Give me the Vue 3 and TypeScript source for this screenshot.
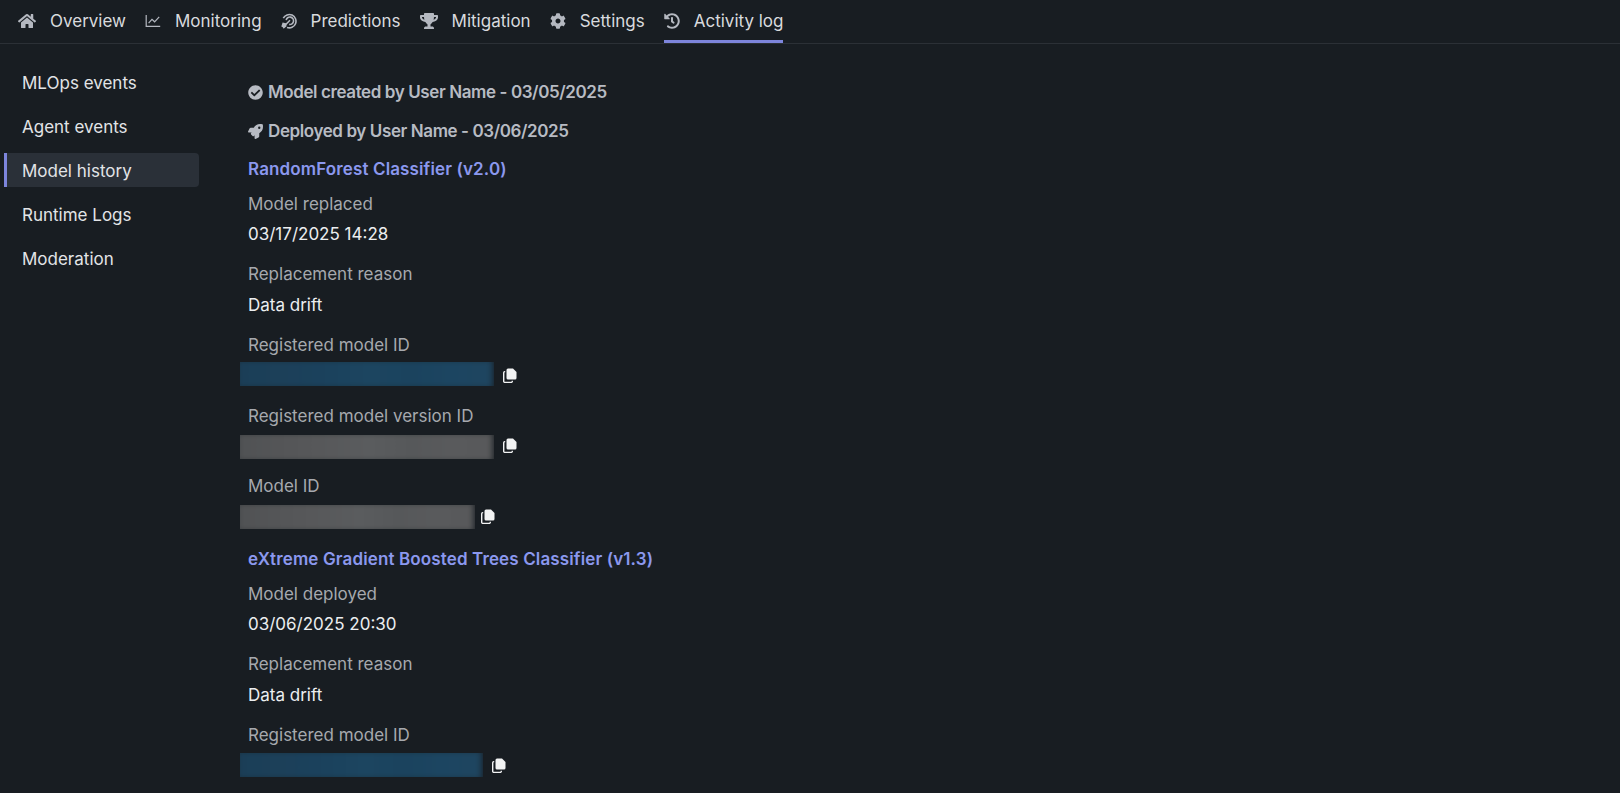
<script setup lang="ts">
interface Tab { label: string; width: number; view: string; path: string; active?: boolean }
const tabs: Tab[] = [
  { label: 'Overview', width: 18, view: '0 0 576 512', path: 'M280.37 148.26L96 300.11V464a16 16 0 0 0 16 16l112.06-.29a16 16 0 0 0 15.92-16V368a16 16 0 0 1 16-16h64a16 16 0 0 1 16 16v95.64a16 16 0 0 0 16 16.05L464 480a16 16 0 0 0 16-16V300L295.67 148.26a12.19 12.19 0 0 0-15.3 0zM571.6 251.47L488 182.56V44.05a12 12 0 0 0-12-12h-56a12 12 0 0 0-12 12v72.61L318.47 43a48 48 0 0 0-61 0L4.34 251.47a12 12 0 0 0-1.6 16.9l25.5 31A12 12 0 0 0 45.15 301l235.22-193.74a12.19 12.19 0 0 1 15.3 0L530.9 301a12 12 0 0 0 16.9-1.6l25.5-31a12 12 0 0 0-1.7-16.93z' },
  { label: 'Monitoring', width: 16, view: '', path: '' },
  { label: 'Predictions', width: 16, view: '', path: '' },
  { label: 'Mitigation', width: 18, view: '0 0 576 512', path: 'M552 64H448V24c0-13.3-10.7-24-24-24H152c-13.3 0-24 10.7-24 24v40H24C10.7 64 0 74.7 0 88v56c0 35.7 22.5 72.4 61.9 100.7 31.5 22.7 69.8 37.1 110 41.7C203.3 338.5 240 360 240 360v72h-48c-35.3 0-64 20.7-64 56v12c0 6.6 5.4 12 12 12h296c6.6 0 12-5.4 12-12v-12c0-35.3-28.7-56-64-56h-48v-72s36.7-21.5 68.1-73.6c40.3-4.6 78.6-19 110-41.7 39.3-28.3 61.9-65 61.9-100.7V88c0-13.3-10.7-24-24-24zM99.3 192.8C74.9 175.2 64 155.6 64 144v-16h64.2c1 32.6 5.8 61.2 12.8 86.2-15.1-5.2-29.2-12.4-41.7-21.4zM512 144c0 16.1-17.7 36.1-35.3 48.8-12.5 9-26.7 16.2-41.8 21.4 7-25 11.8-53.6 12.8-86.2H512v16z' },
  { label: 'Settings', width: 16, view: '0 0 512 512', path: 'M487.4 315.7l-42.6-24.6c4.3-23.2 4.3-47 0-70.2l42.6-24.6c4.9-2.8 7.1-8.6 5.5-14-11.1-35.6-30-67.8-54.7-94.6-3.8-4.1-10-5.1-14.8-2.3L380.8 110c-17.9-15.4-38.5-27.3-60.8-35.1V25.8c0-5.6-3.9-10.5-9.4-11.7-36.7-8.2-74.3-7.8-109.2 0-5.5 1.2-9.4 6.1-9.4 11.7V75c-22.2 7.9-42.8 19.8-60.8 35.1L88.7 85.5c-4.9-2.8-11-1.9-14.8 2.3-24.7 26.7-43.6 58.9-54.7 94.6-1.7 5.4.6 11.2 5.5 14L67.3 221c-4.3 23.2-4.3 47 0 70.2l-42.6 24.6c-4.9 2.8-7.1 8.6-5.5 14 11.1 35.6 30 67.8 54.7 94.6 3.8 4.1 10 5.1 14.8 2.3l42.6-24.6c17.9 15.4 38.5 27.3 60.8 35.1v49.2c0 5.6 3.9 10.5 9.4 11.7 36.7 8.2 74.3 7.8 109.2 0 5.5-1.2 9.4-6.1 9.4-11.7v-49.2c22.2-7.9 42.8-19.8 60.8-35.1l42.6 24.6c4.9 2.8 11 1.9 14.8-2.3 24.7-26.7 43.6-58.9 54.7-94.6 1.5-5.5-.7-11.3-5.6-14.1zM256 336c-44.1 0-80-35.9-80-80s35.9-80 80-80 80 35.9 80 80-35.9 80-80 80z' },
  { label: 'Activity log', width: 16, view: '0 0 512 512', active: true, path: 'M504 255.531c.253 136.64-111.18 248.372-247.82 248.468-59.015.042-113.223-20.53-155.822-54.911-11.077-8.94-11.905-25.541-1.839-35.607l11.267-11.267c8.609-8.609 22.353-9.551 31.891-1.984C173.062 425.135 212.781 440 256 440c101.705 0 184-82.311 184-184 0-101.705-82.311-184-184-184-48.814 0-93.149 18.969-126.068 49.932l50.754 50.754c10.08 10.08 2.941 27.314-11.313 27.314H24c-8.837 0-16-7.163-16-16V38.627c0-14.254 17.234-21.393 27.314-11.314l49.372 49.372C129.209 34.136 189.552 8 256 8c136.81 0 247.747 110.78 248 247.531zm-180.912 78.784l9.823-12.63c8.138-10.463 6.253-25.542-4.21-33.679L288 256.349V152c0-13.255-10.745-24-24-24h-16c-13.255 0-24 10.745-24 24v135.651l65.409 50.874c10.463 8.137 25.541 6.253 33.679-4.21z' },
]

const sideItems = ['MLOps events', 'Agent events', 'Model history', 'Runtime Logs', 'Moderation']

interface Field { label: string; value?: string; mask?: 'blue' | 'gray'; width?: number; tight?: boolean; shift?: number }
interface Group { title: string; fields: Field[] }
const groups: Group[] = [
  {
    title: 'RandomForest Classifier (v2.0)',
    fields: [
      { label: 'Model replaced', value: '03/17/2025 14:28' },
      { label: 'Replacement reason', value: 'Data drift' },
      { label: 'Registered model ID', mask: 'blue', width: 254, shift: -1 },
      { label: 'Registered model version ID', mask: 'gray', width: 254, shift: 1 },
      { label: 'Model ID', mask: 'gray', width: 235, tight: true, shift: 1 },
    ],
  },
  {
    title: 'eXtreme Gradient Boosted Trees Classifier (v1.3)',
    fields: [
      { label: 'Model deployed', value: '03/06/2025 20:30' },
      { label: 'Replacement reason', value: 'Data drift' },
      { label: 'Registered model ID', mask: 'blue', width: 243, shift: 0 },
    ],
  },
]
</script>

<template>
  <div class="page">
    <nav class="tabs">
      <a v-for="t in tabs" :key="t.label" class="tab" :class="{ active: t.active }">
        <span class="tab-icon">
          <svg v-if="t.path" :viewBox="t.view" :width="t.width" :height="16" fill="currentColor"><path :d="t.path" /></svg>
          <svg v-else-if="t.label === 'Monitoring'" viewBox="0 0 16 16" width="16" height="16" fill="none" stroke="currentColor" stroke-width="1.2">
            <path d="M1.2 2v11.4h14" />
            <path d="M3.6 10.2 7 6.4l2.6 2.4 4.6-5" />
          </svg>
          <svg v-else viewBox="0 0 16 16" width="16" height="16" fill="none" stroke="currentColor" stroke-width="1.6">
            <path d="M2.3 5.2A6.7 6.7 0 1 1 6 14.5" />
            <path d="M5.2 7.2a3.7 3.7 0 1 1 3 4.2" />
            <path d="M9 7.3 2 14.4" stroke-width="1.5" />
            <path d="M1.6 9.6 5 10.2 5.6 13.2 2.6 15.8 1.9 14.2 0.3 13.5Z" fill="currentColor" stroke="none" />
          </svg>
        </span>
        <span>{{ t.label }}</span>
      </a>
    </nav>

    <div class="body">
      <aside class="side">
        <a v-for="s in sideItems" :key="s" class="side-item" :class="{ current: s === 'Model history' }">{{ s }}</a>
      </aside>

      <main class="main">
        <div class="event">
          <svg viewBox="0 0 512 512" width="15" height="15" fill="currentColor"><path d="M504 256c0 136.967-111.033 248-248 248S8 392.967 8 256 119.033 8 256 8s248 111.033 248 248zM227.314 387.314l184-184c6.248-6.248 6.248-16.379 0-22.627l-22.627-22.627c-6.248-6.249-16.379-6.249-22.628 0L216 308.118l-70.059-70.059c-6.248-6.248-16.379-6.248-22.628 0l-22.627 22.627c-6.248 6.248-6.248 16.379 0 22.627l104 104c6.249 6.249 16.379 6.249 22.628.001z" /></svg>
          <span>Model created by User Name - 03/05/2025</span>
        </div>
        <div class="event second">
          <svg viewBox="0 0 512 512" width="15" height="15" fill="currentColor"><path d="M505.12019,19.09375c-1.18945-5.53125-6.65819-11-12.207-12.1875C460.716,0,435.507,0,410.40747,0,307.17523,0,245.26909,55.20312,199.05238,128H94.83772c-16.34763.01562-35.55658,11.875-42.88664,26.48438L2.51562,253.29688A28.4,28.4,0,0,0,0,264a24.00867,24.00867,0,0,0,24.00582,24H127.81618l-22.47457,22.46875c-11.36521,11.36133-12.99607,32.25781,0,45.25L156.24582,406.625c11.15623,11.1875,32.15619,13.15625,45.27726,0l22.47457-22.46875V488a24.00867,24.00867,0,0,0,24.00581,24,28.55934,28.55934,0,0,0,10.707-2.51562l98.72834-49.39063c14.62888-7.29687,26.50776-26.5,26.50776-42.85937V312.79688c72.59753-46.3125,128.03493-108.40626,128.03493-211.09376C512.07526,76.5,512.07526,51.29688,505.12019,19.09375ZM384.04033,168A40,40,0,1,1,424.05,128,40.02322,40.02322,0,0,1,384.04033,168Z" /></svg>
          <span>Deployed by User Name - 03/06/2025</span>
        </div>

        <section v-for="g in groups" :key="g.title" class="group">
          <h3 class="title">{{ g.title }}</h3>
          <div v-for="f in g.fields" :key="f.label" class="field">
            <div class="label">{{ f.label }}</div>
            <div v-if="f.value" class="value">{{ f.value }}</div>
            <div v-else class="masked" :class="{ tight: f.tight }">
              <div class="mask" :class="f.mask" :style="{ width: f.width + 'px', transform: `translateY(${f.shift ?? 0}px)` }"><div class="mask-fill"></div></div>
              <svg class="copy" viewBox="0 0 14 15" width="14" height="15">
                <path d="M5 0.5h5l3.5 3.5v6a1.5 1.5 0 0 1-1.5 1.5H5A1.5 1.5 0 0 1 3.5 10V2A1.5 1.5 0 0 1 5 .5Z" fill="#f2f3f4" />
                <path d="M2.2 3.6H1.8A1.2 1.2 0 0 0 .7 4.8v8.4a1.2 1.2 0 0 0 1.2 1.2h6.2a1.2 1.2 0 0 0 1.2-1.2v-.4" fill="none" stroke="#f2f3f4" stroke-width="1.4" />
              </svg>
            </div>
          </div>
        </section>
      </main>
    </div>
  </div>
</template>

<style scoped>
.page {
  height: 793px;
  overflow: hidden;
  background: #181d22;
  font-family: Inter, "Liberation Sans", sans-serif;
  font-size: 17px;
  color: #e4e6e9;
}
.tabs {
  display: flex;
  gap: 19px;
  height: 43px;
  padding-left: 18px;
  border-bottom: 1px solid #2b3036;
  box-sizing: content-box;
}
.tab {
  display: flex;
  align-items: center;
  gap: 14px;
  height: 43px;
  padding-top: 2px;
  box-sizing: border-box;
  color: #d8dade;
  border-bottom: 3px solid transparent;
}
.tab.active { border-bottom-color: #7d85dc; }
.tab-icon { display: flex; color: #b4b8c0; }
.body { display: flex; }
.side {
  width: 195px;
  margin-left: 4px;
  padding-top: 21px;
  display: flex;
  flex-direction: column;
  gap: 10px;
}
.side-item {
  height: 34px;
  display: flex;
  align-items: center;
  padding: 1px 0 0 15px;
  border-radius: 0 4px 4px 0;
  border-left: 3px solid transparent;
  box-sizing: border-box;
  color: #e2e4e7;
}
.side-item.current {
  background: #2a3038;
  border-left-color: #7d85dc;
}
.main { margin-left: 49px; padding-top: 37px; }
.event {
  display: flex;
  align-items: center;
  gap: 5px;
  height: 22px;
  font-weight: 600;
  letter-spacing: -0.4px;
  color: #b7bbc3;
}
.event.second { margin-top: 17px; }
.group { margin-top: 16px; }
.group + .group { margin-top: 20.5px; }
.title {
  margin: 0;
  font-size: 17px;
  line-height: 22px;
  font-weight: 600;
  letter-spacing: 0.13px;
  color: #8b98ee;
}
.field { margin-top: 12px; }
.field + .field { margin-top: 17px; }
.label { line-height: 24px; color: #a6a9ae; }
.value { margin-top: 7px; margin-bottom: -1px; line-height: 24px; color: #eceef0; }
.field:first-of-type .value { margin-top: 6px; }
.masked {
  display: flex;
  align-items: center;
  margin-top: 6px;
  margin-bottom: -0.5px;
  margin-left: -8px;
  height: 24px;
}
.mask { height: 24px; overflow: hidden; }
.mask-fill {
  height: 30px;
  margin: -3px 1px 0 -4px;
  filter: blur(3px);
}
.mask.blue .mask-fill {
  background: linear-gradient(90deg, #1b3e57, #1c4059 18%, #1b415c 32%, #1c4560 52%, #1b435e 68%, #1c4561 84%, #1f4560);
}
.mask.gray .mask-fill {
  background: linear-gradient(90deg, #505254, #545557 16%, #57585a 32%, #5a5c5e 52%, #56585a 68%, #595a5c 84%, #58595b);
}
.copy { margin-left: 9px; flex: none; }
.tight .copy { margin-left: 6px; }
</style>
